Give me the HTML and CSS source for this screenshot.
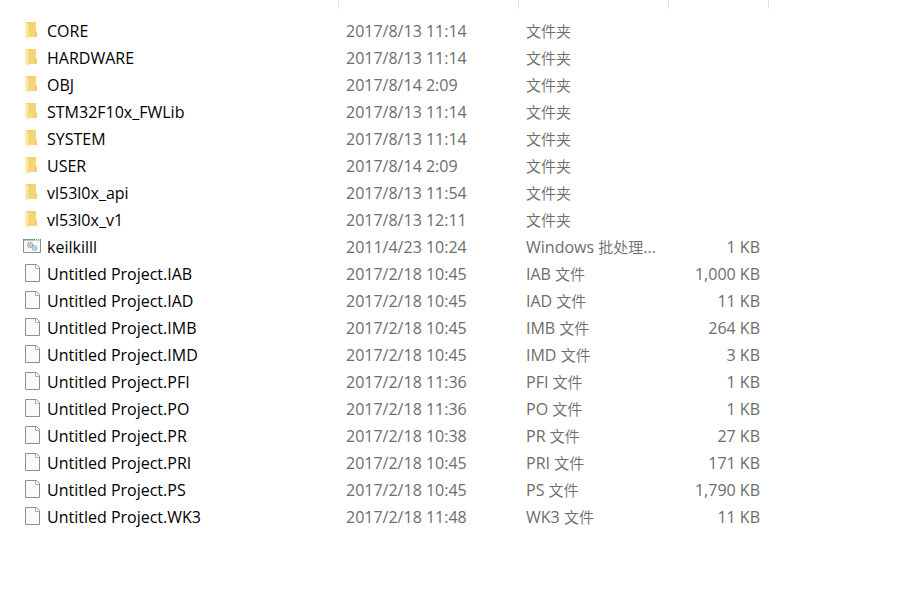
FILE: index.html
```
<!doctype html>
<html lang="zh-CN">
<head>
	<meta charset="UTF-8">
	<title>文件列表</title>
	<link rel="stylesheet" href="styles.css">
</head>
<body>
	<svg class="defs" aria-hidden="true">
		<linearGradient id="front" x1="0" y1="0" x2="1" y2="0">
			<stop offset="0" stop-color="#fff0b8"/>
			<stop offset="1" stop-color="#fbe08e"/>
		</linearGradient>
		<linearGradient id="back" x1="0" y1="0" x2="1" y2="1">
			<stop offset="0" stop-color="#f0cd6c"/>
			<stop offset="1" stop-color="#fbdc80"/>
		</linearGradient>
		<symbol id="folder" viewBox="0 0 18 18">
			<path d="M3 1h10v9.500h1V16H5z" fill="url(#back)"/>
			<path d="M12 10.500h2V16h-3v-4z" fill="#f2cf70"/>
			<path d="M2 1l4 2v12l-1 3-3-2z" fill="url(#front)"/>
			<path d="M5.800 3v12" stroke="#efd081" stroke-width=".6"/>
		</symbol>
		<symbol id="bat" viewBox="0 0 18 18">
			<path d="M.5 2.500h17v13H.5z" fill="#f7f7f7" stroke="#8b8f94"/>
			<path d="M0 2h18v1.500H0z" fill="#8b8f94"/>
			<path d="M12 2.700h1M14 2.700h1M16 2.700h1" stroke="#fff"/>
			<circle cx="7.200" cy="8" r="2.500" fill="#f4f4f4" stroke="#8f8f8f" stroke-width="1.200" stroke-dasharray="1.100 .5"/>
			<circle cx="7.200" cy="8" r="1" fill="#fff" stroke="#888" stroke-width=".7"/>
			<circle cx="11.500" cy="11" r="2.300" fill="#e6f2fa" stroke="#7fa9c6" stroke-width="1.200" stroke-dasharray="1.100 .5"/>
			<circle cx="11.500" cy="11" r=".9" fill="#fff" stroke="#6f9dbf" stroke-width=".6"/>
		</symbol>
		<symbol id="file" viewBox="0 0 18 18">
			<path d="M2.500.5h11l3 3v14h-14z" fill="#fafafa" stroke="#8e8e8e"/>
			<path d="M12.500 1v3.500h3.500" fill="#fff" stroke="#9a9a9a" stroke-width=".8"/>
		</symbol>
	</svg>
	<table class="files">
		<colgroup>
			<col class="col_name">
			<col class="col_date">
			<col class="col_type">
			<col class="col_size">
			<col>
		</colgroup>
		<thead>
			<tr>
				<th scope="col" aria-label="名称"></th>
				<th scope="col" aria-label="修改日期"></th>
				<th scope="col" aria-label="类型"></th>
				<th scope="col" aria-label="大小"></th>
				<td></td>
			</tr>
		</thead>
		<tbody>
			<tr><td class="name"><svg class="icon"><use href="#folder"/></svg>CORE</td><td>2017/8/13 11:14</td><td><span class="cn">文件夹</span></td><td></td><td></td></tr>
			<tr><td class="name"><svg class="icon"><use href="#folder"/></svg>HARDWARE</td><td>2017/8/13 11:14</td><td><span class="cn">文件夹</span></td><td></td><td></td></tr>
			<tr><td class="name"><svg class="icon"><use href="#folder"/></svg>OBJ</td><td>2017/8/14 2:09</td><td><span class="cn">文件夹</span></td><td></td><td></td></tr>
			<tr><td class="name"><svg class="icon"><use href="#folder"/></svg>STM32F10x_FWLib</td><td>2017/8/13 11:14</td><td><span class="cn">文件夹</span></td><td></td><td></td></tr>
			<tr><td class="name"><svg class="icon"><use href="#folder"/></svg>SYSTEM</td><td>2017/8/13 11:14</td><td><span class="cn">文件夹</span></td><td></td><td></td></tr>
			<tr><td class="name"><svg class="icon"><use href="#folder"/></svg>USER</td><td>2017/8/14 2:09</td><td><span class="cn">文件夹</span></td><td></td><td></td></tr>
			<tr><td class="name"><svg class="icon"><use href="#folder"/></svg>vl53l0x_api</td><td>2017/8/13 11:54</td><td><span class="cn">文件夹</span></td><td></td><td></td></tr>
			<tr><td class="name"><svg class="icon"><use href="#folder"/></svg>vl53l0x_v1</td><td>2017/8/13 12:11</td><td><span class="cn">文件夹</span></td><td></td><td></td></tr>
			<tr><td class="name"><svg class="icon"><use href="#bat"/></svg>keilkilll</td><td>2011/4/23 10:24</td><td>Windows <span class="cn">批处理</span>...</td><td class="size">1 KB</td><td></td></tr>
			<tr><td class="name"><svg class="icon"><use href="#file"/></svg>Untitled Project.IAB</td><td>2017/2/18 10:45</td><td>IAB <span class="cn">文件</span></td><td class="size">1,000 KB</td><td></td></tr>
			<tr><td class="name"><svg class="icon"><use href="#file"/></svg>Untitled Project.IAD</td><td>2017/2/18 10:45</td><td>IAD <span class="cn">文件</span></td><td class="size">11 KB</td><td></td></tr>
			<tr><td class="name"><svg class="icon"><use href="#file"/></svg>Untitled Project.IMB</td><td>2017/2/18 10:45</td><td>IMB <span class="cn">文件</span></td><td class="size">264 KB</td><td></td></tr>
			<tr><td class="name"><svg class="icon"><use href="#file"/></svg>Untitled Project.IMD</td><td>2017/2/18 10:45</td><td>IMD <span class="cn">文件</span></td><td class="size">3 KB</td><td></td></tr>
			<tr><td class="name"><svg class="icon"><use href="#file"/></svg>Untitled Project.PFI</td><td>2017/2/18 11:36</td><td>PFI <span class="cn">文件</span></td><td class="size">1 KB</td><td></td></tr>
			<tr><td class="name"><svg class="icon"><use href="#file"/></svg>Untitled Project.PO</td><td>2017/2/18 11:36</td><td>PO <span class="cn">文件</span></td><td class="size">1 KB</td><td></td></tr>
			<tr><td class="name"><svg class="icon"><use href="#file"/></svg>Untitled Project.PR</td><td>2017/2/18 10:38</td><td>PR <span class="cn">文件</span></td><td class="size">27 KB</td><td></td></tr>
			<tr><td class="name"><svg class="icon"><use href="#file"/></svg>Untitled Project.PRI</td><td>2017/2/18 10:45</td><td>PRI <span class="cn">文件</span></td><td class="size">171 KB</td><td></td></tr>
			<tr><td class="name"><svg class="icon"><use href="#file"/></svg>Untitled Project.PS</td><td>2017/2/18 10:45</td><td>PS <span class="cn">文件</span></td><td class="size">1,790 KB</td><td></td></tr>
			<tr><td class="name"><svg class="icon"><use href="#file"/></svg>Untitled Project.WK3</td><td>2017/2/18 11:48</td><td>WK3 <span class="cn">文件</span></td><td class="size">11 KB</td><td></td></tr>
		</tbody>
	</table>
</body>
</html>
```
FILE: styles.css
```
body{
	margin: 0;
	background-color: #fff;
	font-family: 'Open Sans', 'Noto Sans CJK SC', sans-serif;
	font-size: 16px;
	color: #6d6d6d;
}
.defs{
	display: block;
	width: 0;
	height: 0;
}
.files{
	width: 100%;
	table-layout: fixed;
	border-collapse: separate;
	border-spacing: 0;
}
.col_name{
	width: 339px;
}
.col_date{
	width: 180px;
}
.col_type{
	width: 150px;
}
.col_size{
	width: 100px;
}
.files td, .files th{
	padding: 0;
	white-space: nowrap;
}
.files thead th{
	height: 9px;
	border-right: 1px solid #e2e2e2;
}
/* 表头与列表之间的间距 */
.files tbody::before{
	content: '';
	display: table-row;
	height: 8px;
}
.files tbody td{
	height: 27px;
	padding-left: 7px;
	line-height: 24px;
}
.files tbody .name{
	padding-left: 23px;
	color: #000;
}
.files tbody .size{
	padding-right: 9px;
	text-align: right;
}
.icon{
	width: 18px;
	height: 18px;
	margin-right: 6px;
	vertical-align: -2px;
}
.cn{
	font-family: 'Noto Sans CJK SC', sans-serif;
	font-size: 15px;
	font-weight: 350;
	line-height: 1;
}
```
